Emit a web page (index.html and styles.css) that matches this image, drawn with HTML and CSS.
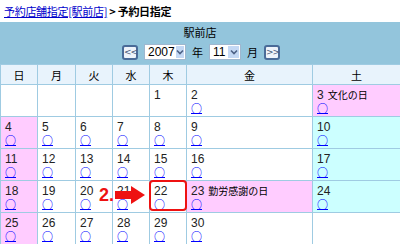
FILE: index.html
```html
<!DOCTYPE html>
<html lang="ja">
<head>
<meta charset="utf-8">
<link rel="stylesheet" href="styles.css">
</head>
<body>
<div class="crumb"><a href="#" class="crumb-link">予約店舗指定[駅前店]</a> <b>&gt; 予約日指定</b></div>
<div class="panel">
  <div class="shop">駅前店</div>
  <div class="nav">
    <span class="btn">&lt;&lt;</span>
    <span class="sel sel-year"><span class="sel-val">2007</span><span class="sel-arrow"><svg width="8" height="6" viewBox="0 0 8 6"><polyline points="1,1.5 4,4.5 7,1.5" fill="none" stroke="#4d6185" stroke-width="1.6"/></svg></span></span>
    <span class="unit">年</span>
    <span class="sel sel-month"><span class="sel-val">11</span><span class="sel-arrow"><svg width="8" height="6" viewBox="0 0 8 6"><polyline points="1,1.5 4,4.5 7,1.5" fill="none" stroke="#4d6185" stroke-width="1.6"/></svg></span></span>
    <span class="unit">月</span>
    <span class="btn">&gt;&gt;</span>
  </div>
</div>
<table class="cal">
  <colgroup>
    <col class="c-n"><col class="c-n2"><col class="c-n"><col class="c-n"><col class="c-n"><col class="c-fri"><col class="c-sat">
  </colgroup>
  <thead>
    <tr><th>日</th><th>月</th><th>火</th><th>水</th><th>木</th><th>金</th><th>土</th></tr>
  </thead>
  <tbody>
    <tr>
      <td></td><td></td><td></td><td></td>
      <td><span class="num">1</span></td>
      <td><span class="num">2</span><a href="#" class="ok">○</a></td>
      <td class="hol"><span class="num">3</span><span class="hname">文化の日</span><a href="#" class="ok">○</a></td>
    </tr>
    <tr>
      <td class="sun"><span class="num">4</span><a href="#" class="ok">○</a></td>
      <td><span class="num">5</span><a href="#" class="ok">○</a></td>
      <td><span class="num">6</span><a href="#" class="ok">○</a></td>
      <td><span class="num">7</span><a href="#" class="ok">○</a></td>
      <td><span class="num">8</span><a href="#" class="ok">○</a></td>
      <td><span class="num">9</span><a href="#" class="ok">○</a></td>
      <td class="sat"><span class="num">10</span><a href="#" class="ok">○</a></td>
    </tr>
    <tr>
      <td class="sun"><span class="num">11</span><a href="#" class="ok">○</a></td>
      <td><span class="num">12</span><a href="#" class="ok">○</a></td>
      <td><span class="num">13</span><a href="#" class="ok">○</a></td>
      <td><span class="num">14</span><a href="#" class="ok">○</a></td>
      <td><span class="num">15</span><a href="#" class="ok">○</a></td>
      <td><span class="num">16</span><a href="#" class="ok">○</a></td>
      <td class="sat"><span class="num">17</span><a href="#" class="ok">○</a></td>
    </tr>
    <tr>
      <td class="sun"><span class="num">18</span><a href="#" class="ok">○</a></td>
      <td><span class="num">19</span><a href="#" class="ok">○</a></td>
      <td><span class="num">20</span><a href="#" class="ok">○</a></td>
      <td><span class="num">21</span><a href="#" class="ok">○</a></td>
      <td class="pick"><span class="num">22</span><a href="#" class="ok">○</a><span class="ring"></span></td>
      <td class="hol"><span class="num">23</span><span class="hname">勤労感謝の日</span><a href="#" class="ok">○</a></td>
      <td class="sat"><span class="num">24</span><a href="#" class="ok">○</a></td>
    </tr>
    <tr>
      <td class="sun"><span class="num">25</span><a href="#" class="ok">○</a></td>
      <td><span class="num">26</span><a href="#" class="ok">○</a></td>
      <td><span class="num">27</span><a href="#" class="ok">○</a></td>
      <td><span class="num">28</span><a href="#" class="ok">○</a></td>
      <td><span class="num">29</span><a href="#" class="ok">○</a></td>
      <td><span class="num">30</span><a href="#" class="ok">○</a></td>
      <td></td>
    </tr>
  </tbody>
</table>
<div class="callout">
  <span class="step">2.</span>
  <svg class="arrow" width="30" height="18" viewBox="0 0 30 18"><rect x="0" y="5" width="17" height="8" fill="#ee1111"/><polygon points="16,0 30,9 16,18" fill="#ee1111"/></svg>
</div>
</body>
</html>
```

FILE: styles.css
```css
html, body {
  margin: 0;
  padding: 0;
  background: #ffffff;
}
body {
  width: 400px;
  height: 244px;
  overflow: hidden;
  position: relative;
  font-family: "Liberation Sans", "Noto Sans CJK JP", sans-serif;
  font-size: 12px;
  color: #000;
}
.crumb {
  height: 22px;
  box-sizing: border-box;
  padding: 4px 0 0 4px;
  font-family: "Noto Sans CJK JP", sans-serif;
  font-size: 11px;
  line-height: 14px;
  letter-spacing: -0.3px;
  white-space: nowrap;
}
.crumb-link {
  color: #0000cc;
  text-decoration: underline;
}
.crumb b {
  font-weight: bold;
}
.panel {
  background: #93c5dc;
  height: 42px;
  box-sizing: border-box;
  padding-top: 3px;
}
.shop {
  text-align: center;
  font-family: "Noto Sans CJK JP", sans-serif;
  font-size: 11px;
  line-height: 14px;
}
.nav {
  margin-top: 5px;
  height: 16px;
  display: flex;
  justify-content: center;
  align-items: center;
  gap: 6px;
  padding-left: 2px;
}
.btn {
  width: 12px;
  height: 11px;
  border: 2px solid #4a6b98;
  border-radius: 3px;
  background: #eef3fa;
  font-family: "DejaVu Sans", sans-serif;
  font-size: 9px;
  line-height: 11px;
  text-align: center;
  color: #4a5a7a;
  letter-spacing: -1px;
}
.sel {
  display: flex;
  align-items: stretch;
  height: 14px;
  border: 1px solid #9fb7cf;
  background: #fff;
}
.sel-year { width: 40px; }
.sel-month { width: 30px; }
.sel-val {
  flex: 1;
  padding-left: 3px;
  font-size: 12px;
  line-height: 14px;
}
.sel-arrow {
  width: 11px;
  margin: 1px;
  background: #c4d8f4;
  display: flex;
  align-items: center;
  justify-content: center;
}
.unit {
  font-family: "Noto Sans CJK JP", sans-serif;
  font-size: 11px;
  line-height: 14px;
}
.cal {
  width: 400px;
  border-collapse: collapse;
  table-layout: fixed;
}
.c-n { width: 37px; }
.c-n2 { width: 38px; }
.c-fri { width: 126px; }
.c-sat { width: 88px; }
.cal th {
  background: #e8f3fc;
  border: 1px solid #9fcbe2;
  height: 19px;
  padding: 0;
  font-family: "Noto Sans CJK JP", sans-serif;
  font-size: 11px;
  font-weight: normal;
  line-height: 14px;
  text-align: center;
}
.cal td {
  border: 1px solid #9fcbe2;
  height: 32px;
  box-sizing: border-box;
  padding: 3px 0 0 4px;
  vertical-align: top;
  background: #fff;
  position: relative;
}
.cal td.sun, .cal td.hol { background: #ffccff; }
.cal td.sat { background: #ccffff; }
.num {
  font-size: 12px;
  line-height: 13px;
  color: #222;
}
.hname {
  margin-left: 4px;
  font-family: "Noto Sans CJK JP", sans-serif;
  font-size: 10px;
  line-height: 13px;
}
.ok {
  display: block;
  width: 11px;
  font-family: "Noto Sans CJK JP", sans-serif;
  font-weight: bold;
  font-size: 11px;
  line-height: 12px;
  color: #0000ff;
  text-decoration: underline;
  text-underline-offset: 0px;
  margin-top: 0;
}
.ring {
  position: absolute;
  left: -1px;
  top: -1px;
  right: -1px;
  bottom: 1px;
  border: 2px solid #ee1111;
  border-radius: 4px;
}
.callout {
  position: absolute;
  left: 99px;
  top: 186px;
  display: flex;
  align-items: center;
  gap: 1px;
}
.step {
  color: #ee1111;
  font-family: "Liberation Sans", sans-serif;
  font-weight: bold;
  font-size: 18px;
  line-height: 18px;
}
```
